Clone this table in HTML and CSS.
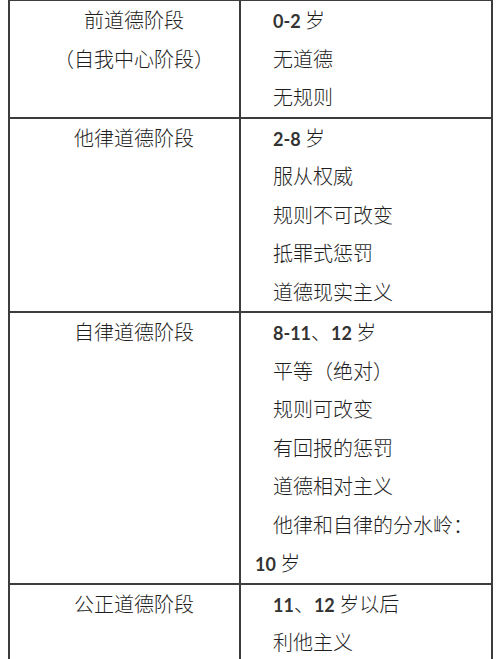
FILE: index.html
```html
<!DOCTYPE html>
<html lang="zh-CN">
<head>
<meta charset="utf-8">
<link rel="stylesheet" href="styles.css">
</head>
<body>
<table class="stages">
  <tr>
    <td class="name"><div>前道德阶段</div><div>（自我中心阶段）</div><div>&nbsp;</div></td>
    <td class="desc"><p><span class="num">0-2</span> 岁</p><p>无道德</p><p>无规则</p></td>
  </tr>
  <tr>
    <td class="name"><div>他律道德阶段</div><div>&nbsp;</div><div>&nbsp;</div><div>&nbsp;</div><div>&nbsp;</div></td>
    <td class="desc"><p><span class="num">2-8</span> 岁</p><p>服从权威</p><p>规则不可改变</p><p>抵罪式惩罚</p><p>道德现实主义</p></td>
  </tr>
  <tr>
    <td class="name"><div>自律道德阶段</div><div>&nbsp;</div><div>&nbsp;</div><div>&nbsp;</div><div>&nbsp;</div><div>&nbsp;</div><div>&nbsp;</div></td>
    <td class="desc"><p><span class="num">8-11</span>、<span class="num">12</span> 岁</p><p>平等（绝对）</p><p>规则可改变</p><p>有回报的惩罚</p><p>道德相对主义</p><p>他律和自律的分水岭：<span class="num">10</span> 岁</p></td>
  </tr>
  <tr>
    <td class="name"><div>公正道德阶段</div><div>&nbsp;</div></td>
    <td class="desc"><p><span class="num">11</span>、<span class="num">12</span> 岁以后</p><p>利他主义</p></td>
  </tr>
</table>
</body>
</html>
```
FILE: styles.css
```css
html, body {
  margin: 0;
  padding: 0;
  background: #ffffff;
}
body {
  padding-left: 8px;
  overflow: hidden;
}
.stages {
  margin-top: -1px;
  border-collapse: collapse;
  width: 485px;
  table-layout: fixed;
  font-family: "Noto Sans CJK SC", sans-serif;
  font-weight: 300;
  font-size: 20px;
  color: #1e1e1e;
  line-height: 38.5px;
}
.stages td {
  border: 2px solid #3c3c3c;
  vertical-align: top;
  padding: 0;
}
.stages td.name {
  width: 231px;
  text-align: center;
  padding: 0 5px 0 24px;
  box-sizing: border-box;
}
.stages td.desc {
  padding: 0 2px 0 14px;
}
.desc p {
  margin: 0;
  text-indent: 18px;
}
.name div {
  height: 38.5px;
}
.desc p {
  height: auto;
}
.num {
  font-family: Lato, "Noto Sans CJK SC", sans-serif;
  font-weight: 700;
  font-size: 18px;
  line-height: 1;
  color: #333333;
}
```
